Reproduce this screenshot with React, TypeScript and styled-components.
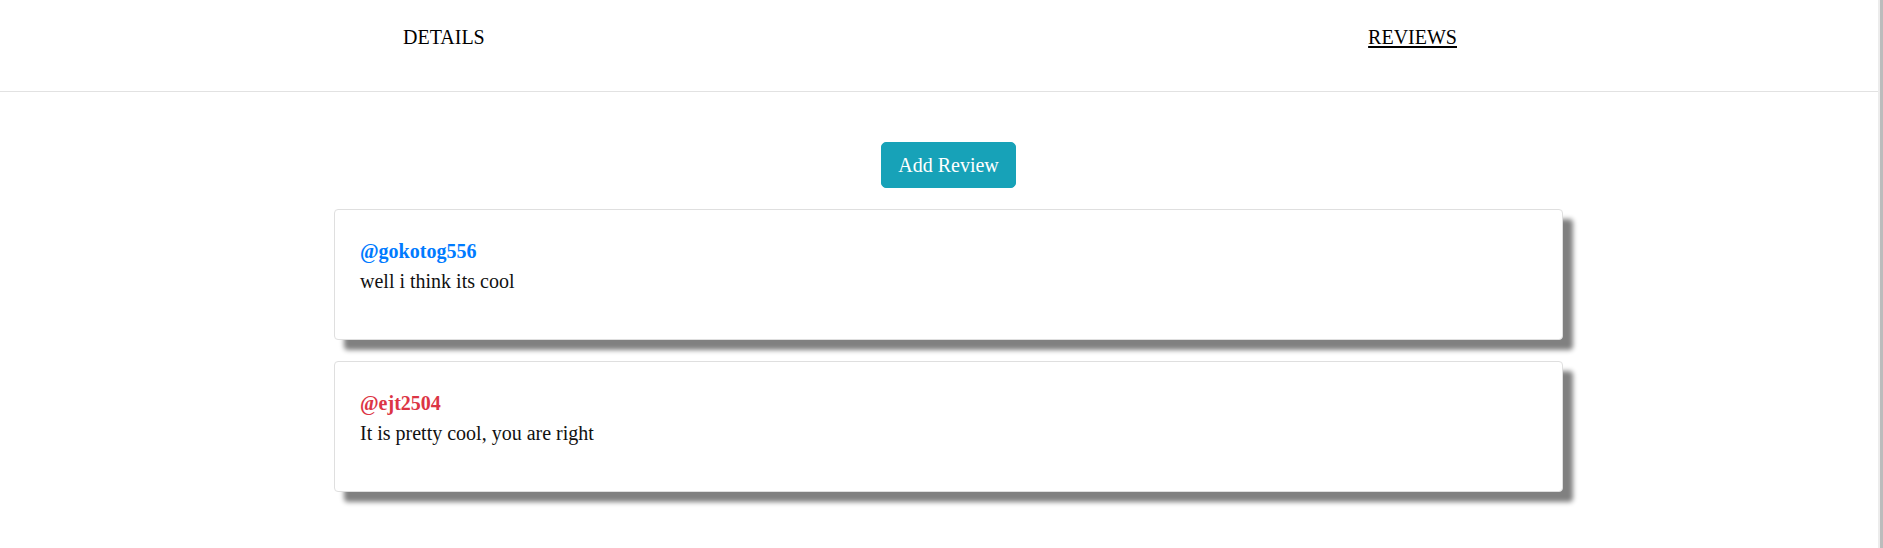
import React, { useState } from "react";
import styled, { createGlobalStyle } from "styled-components";

const GlobalStyle = createGlobalStyle`
  body {
    margin: 0;
    background: #fff;
    color: #111;
    font-family: "Liberation Serif", "Times New Roman", serif;
    font-size: 20px;
    line-height: 1.5;
  }
`;

const Page = styled.div`
  display: flex;
  min-height: 100vh;
`;

const Content = styled.div`
  flex: 1;
  min-width: 0;
`;

// thin page scrollbar at the right edge
const ScrollTrack = styled.div`
  width: 5px;
  flex-shrink: 0;
  display: flex;
  background: #ececec;
`;

const ScrollThumb = styled.div`
  flex: 1;
  margin-left: 2px;
  background: #bcbcbc;
`;

const TabBar = styled.nav`
  display: flex;
  justify-content: space-between;
  padding: 22px 421px 39px 403px;
  border-bottom: 1px solid #e2e2e2;
`;

const Tab = styled.a<{ active?: boolean }>`
  color: #000;
  font-size: 20px;
  line-height: 30px;
  cursor: pointer;
  text-decoration: ${(p) => (p.active ? "underline" : "none")};
  text-decoration-thickness: 2px;
  text-underline-offset: 2px;
`;

const Main = styled.main`
  display: flex;
  flex-direction: column;
  gap: 21px;
  padding: 50px 315px 40px 334px;
`;

const AddButton = styled.button`
  align-self: center;
  padding: 7px 16px;
  background-color: #17a2b8;
  color: #fff;
  border: 1px solid #17a2b8;
  border-radius: 5px;
  font-family: inherit;
  font-size: 20px;
  line-height: 30px;
  cursor: pointer;
  &:hover {
    opacity: 0.9;
  }
`;

const Card = styled.div`
  background: #fff;
  border: 1px solid #dfdfdf;
  border-radius: 4px;
  padding: 26px 25px 24px;
  box-shadow: 10px 10px 5px grey;
`;

const User = styled.div<{ color: string }>`
  font-weight: bold;
  color: ${(p) => p.color};
  line-height: 30px;
`;

const Text = styled.p`
  margin: 0 0 19px;
  line-height: 30px;
`;

const reviews = [
  { id: "1", user: "gokotog556", text: "well i think its cool", color: "#007bff" },
  { id: "2", user: "ejt2504", text: "It is pretty cool, you are right", color: "#dc3545" },
];

const App: React.FC = () => {
  const [tab, setTab] = useState<"details" | "reviews">("reviews");

  return (
    <Page>
      <GlobalStyle />
      <Content>
        <TabBar>
          <Tab active={tab === "details"} onClick={() => setTab("details")}>DETAILS</Tab>
          <Tab active={tab === "reviews"} onClick={() => setTab("reviews")}>REVIEWS</Tab>
        </TabBar>
        <Main>
          <AddButton>Add Review</AddButton>
          {reviews.map((r) => (
            <Card key={r.id}>
              <User color={r.color}>@{r.user}</User>
              <Text>{r.text}</Text>
            </Card>
          ))}
        </Main>
      </Content>
      <ScrollTrack>
        <ScrollThumb />
      </ScrollTrack>
    </Page>
  );
};

export default App;
